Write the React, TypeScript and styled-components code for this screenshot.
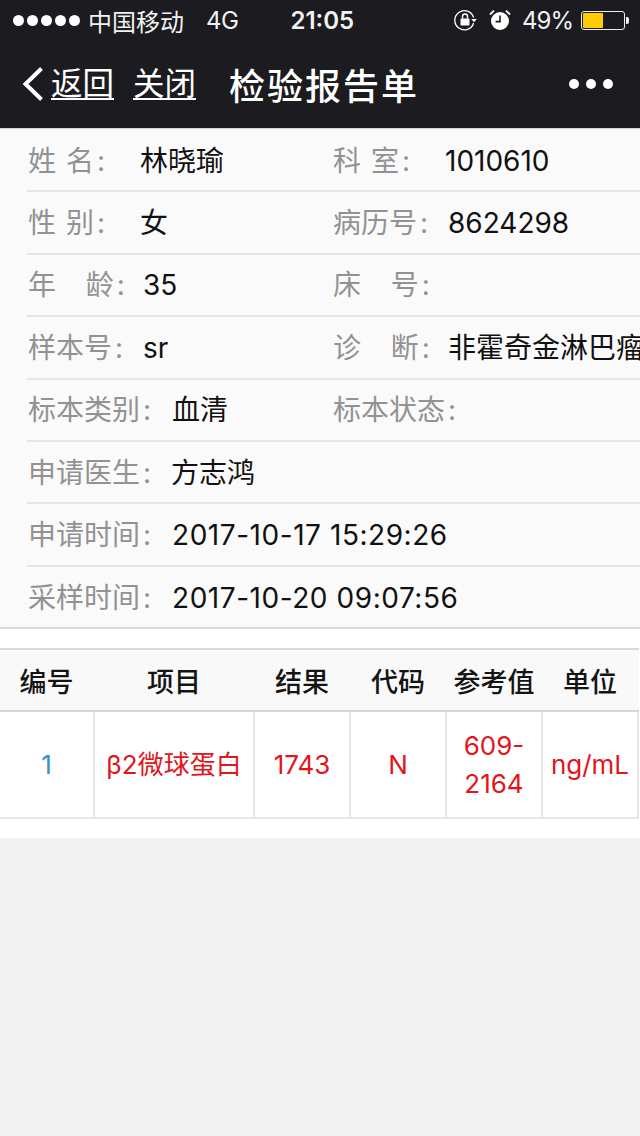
import React from 'react';
import styled, { createGlobalStyle } from 'styled-components';

const FONT = 'Inter, "Noto Sans CJK SC", sans-serif';

const GlobalStyle = createGlobalStyle`
  html, body { margin: 0; padding: 0; background: #f2f2f2; }
  body { font-family: ${FONT}; }
`;

const Page = styled.div`
  width: 640px;
  height: 1136px;
  overflow: hidden;
  background: #f2f2f2;
`;

const Header = styled.header`
  background: #1b1b20;
  height: 128px;
  color: #fff;
`;

const StatusBar = styled.div`
  height: 40px;
  display: flex;
  align-items: center;
  padding: 0 11px 0 13px;
  font-size: 24px;
  color: #f2f2f2;
`;

const Signal = styled.div`
  display: flex;
  gap: 3px;
  margin-right: 8px;
`;

const Dot = styled.span`
  width: 11px;
  height: 11px;
  border-radius: 50%;
  background: #fff;
`;

const Network = styled.span`
  margin-left: 22px;
  letter-spacing: -0.5px;
`;

const Clock = styled.span`
  margin-left: 52px;
  font-weight: 600;
`;

const StatusRight = styled.div`
  margin-left: auto;
  display: flex;
  align-items: center;
`;

const Percent = styled.span`
  margin: 0 8px 0 11px;
  letter-spacing: -1px;
`;

const Battery = styled.div`
  width: 44px;
  height: 19px;
  border: 1px solid #eee;
  border-radius: 3px;
  padding: 1px;
  box-sizing: border-box;
`;

const BatteryFill = styled.div`
  height: 100%;
  background: #ffcc00;
  border-radius: 1px;
`;

const BatteryTip = styled.div`
  width: 3px;
  height: 7px;
  background: #eee;
  margin-left: 1px;
  border-radius: 0 2px 2px 0;
`;

const NavBar = styled.nav`
  height: 88px;
  display: flex;
  align-items: center;
  padding: 0 27px 0 22px;
`;

const NavLink = styled.span<{ $gap: number }>`
  font-size: 31.5px;
  line-height: 40px;
  text-decoration: underline;
  text-underline-offset: 3px;
  text-decoration-thickness: 2px;
  margin-left: ${(p) => p.$gap}px;
`;

const NavTitle = styled.h1`
  margin: 0 0 0 33px;
  font-size: 36px;
  font-weight: 500;
  letter-spacing: 2px;
`;

const More = styled.div`
  margin-left: auto;
  display: flex;
  gap: 7px;
`;

const MoreDot = styled.span`
  width: 10px;
  height: 10px;
  border-radius: 50%;
  background: #fff;
`;

const Info = styled.section`
  background: #fafafa;
  height: 501px;
  padding-top: 1px;
  border-top: 1px solid #d5d5d5;
  box-sizing: border-box;
  border-bottom: 2px solid #d9d9d9;
  overflow: hidden;
`;

const InfoRow = styled.div<{ $last?: boolean }>`
  height: 62.4px;
  box-sizing: border-box;
  margin-left: 27px;
  padding: 1px 0 0 1px;
  display: flex;
  align-items: center;
  border-bottom: ${(p) => (p.$last ? 'none' : '2px solid #e6e6e6')};
  font-size: 28px;
  line-height: 40px;
  white-space: nowrap;
  overflow: hidden;
`;

const Field = styled.div<{ $width?: number }>`
  display: flex;
  align-items: baseline;
  flex: ${(p) => (p.$width ? `0 0 ${p.$width}px` : '1 1 auto')};
  min-width: 0;
`;

const Label = styled.span<{ $width: number }>`
  flex: 0 0 ${(p) => p.$width}px;
  color: #929292;
  white-space: pre;
  word-spacing: 2px;
`;

const Colon = styled.span`
  margin-left: 3px;
`;

const Value = styled.span<{ $date?: boolean }>`
  color: #111;
  letter-spacing: ${(p) => (p.$date ? '0.55px' : '0')};
`;

const Spacer = styled.div`
  height: 19px;
  background: #fff;
`;

const Table = styled.section`
  background: #fff;
  padding-bottom: 19px;
`;

const TableGrid = styled.div`
  display: grid;
  grid-template-columns: 95px 160px 96px 96px 96px 96px;
`;

const HeadCell = styled.div`
  height: 64px;
  box-sizing: border-box;
  padding-right: 2px;
  background: #f9f9f9;
  border-top: 2px solid #d9d9d9;
  border-bottom: 2px solid #d5d5d5;
  display: flex;
  align-items: center;
  justify-content: center;
  font-size: 27px;
  font-weight: 500;
  color: #141414;
`;

const BodyCell = styled.div<{ $blue?: boolean }>`
  height: 107px;
  box-sizing: border-box;
  border-right: 2px solid #e6e6e6;
  border-bottom: 2px solid #e6e6e6;
  display: flex;
  align-items: center;
  justify-content: center;
  text-align: center;
  padding: 0 4px;
  font-size: 26px;
  line-height: 38px;
  color: ${(p) => (p.$blue ? '#3a8ed0' : '#e3151c')};
`;

const LockIcon = styled.svg`
  margin-right: 12px;
`;

const RotationLock = () => (
  <LockIcon width="24" height="24" viewBox="0 0 24 24" fill="none">
    <path d="M20.6 9.5A9.6 9.6 0 1 0 20.6 15" stroke="#fff" strokeWidth="1.3" />
    <path d="M18.2 11h5.6l-2.8 3.2z" fill="#fff" />
    <rect x="7.5" y="10.5" width="9" height="7" rx="1" fill="#fff" />
    <path d="M9.5 10.5V8.6a2.5 2.5 0 0 1 5 0v1.9" stroke="#fff" strokeWidth="1.5" />
  </LockIcon>
);

const Alarm = () => (
  <svg width="22" height="22" viewBox="0 0 22 22" fill="none">
    <circle cx="11" cy="12" r="9" fill="#fff" />
    <path d="M11 6.5V12.6H6.6" stroke="#1b1b20" strokeWidth="1.6" />
    <path d="M1 5.5 5 1.6M21 5.5 17 1.6" stroke="#fff" strokeWidth="1.8" />
  </svg>
);

const BackChevron = () => (
  <svg width="22" height="36" viewBox="0 0 22 36" fill="none">
    <path d="M19.5 2.5 3.5 18l16 15.5" stroke="#fff" strokeWidth="4" />
  </svg>
);

const rows: [string, number, string, string?, number?, string?][] = [
  ['姓 名', 112, '林晓瑜', '科 室', 112, '1010610'],
  ['性 别', 112, '女', '病历号', 115, '8624298'],
  ['年   龄', 115, '35', '床   号', 115, ''],
  ['样本号', 115, 'sr', '诊   断', 115, '非霍奇金淋巴瘤'],
  ['标本类别', 144, '血清', '标本状态', 130, ''],
  ['申请医生', 143, '方志鸿'],
  ['申请时间', 144, '2017-10-17 15:29:26'],
  ['采样时间', 144, '2017-10-20 09:07:56'],
];

const heads = ['编号', '项目', '结果', '代码', '参考值', '单位'];
const cells = ['β2微球蛋白', '1743', 'N', '609-2164', 'ng/mL'];

export default function App() {
  return (
    <Page>
      <GlobalStyle />
      <Header>
        <StatusBar>
          <Signal>
            {[0, 1, 2, 3, 4].map((i) => (
              <Dot key={i} />
            ))}
          </Signal>
          <span>中国移动</span>
          <Network>4G</Network>
          <Clock>21:05</Clock>
          <StatusRight>
            <RotationLock />
            <Alarm />
            <Percent>49%</Percent>
            <Battery>
              <BatteryFill style={{ width: '49%' }} />
            </Battery>
            <BatteryTip />
          </StatusRight>
        </StatusBar>
        <NavBar>
          <BackChevron />
          <NavLink $gap={7}>返回</NavLink>
          <NavLink $gap={19}>关闭</NavLink>
          <NavTitle>检验报告单</NavTitle>
          <More>
            <MoreDot />
            <MoreDot />
            <MoreDot />
          </More>
        </NavBar>
      </Header>
      <Info>
        {rows.map(([label, width, value, label2, width2, value2], i) => (
          <InfoRow key={label} $last={i === rows.length - 1}>
            <Field $width={305}>
              <Label $width={width}>
                {label}
                <Colon>:</Colon>
              </Label>
              <Value $date={i >= 6}>{value}</Value>
            </Field>
            {label2 && (
              <Field>
                <Label $width={width2 ?? 0}>
                  {label2}
                  <Colon>:</Colon>
                </Label>
                <Value>{value2}</Value>
              </Field>
            )}
          </InfoRow>
        ))}
      </Info>
      <Spacer />
      <Table>
        <TableGrid>
          {heads.map((h) => (
            <HeadCell key={h}>{h}</HeadCell>
          ))}
          <BodyCell $blue>1</BodyCell>
          {cells.map((c) => (
            <BodyCell key={c}>{c}</BodyCell>
          ))}
        </TableGrid>
      </Table>
    </Page>
  );
}
